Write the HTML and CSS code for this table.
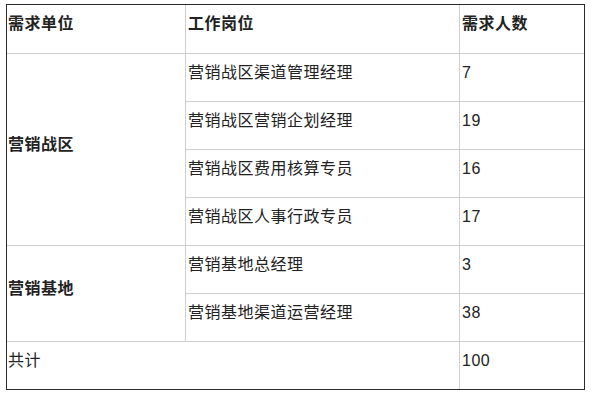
FILE: index.html
```html
<!DOCTYPE html>
<html lang="zh">
<head>
<meta charset="utf-8">
<link rel="stylesheet" href="styles.css">
</head>
<body>
<table class="grid">
  <tr class="head">
    <td class="c1">需求单位</td>
    <td class="c2">工作岗位</td>
    <td class="c3 last">需求人数</td>
  </tr>
  <tr>
    <td class="c1 unit" rowspan="4">营销战区</td>
    <td class="c2">营销战区渠道管理经理</td>
    <td class="c3 last">7</td>
  </tr>
  <tr>
    <td class="c2">营销战区营销企划经理</td>
    <td class="c3 last">19</td>
  </tr>
  <tr>
    <td class="c2">营销战区费用核算专员</td>
    <td class="c3 last">16</td>
  </tr>
  <tr>
    <td class="c2">营销战区人事行政专员</td>
    <td class="c3 last">17</td>
  </tr>
  <tr>
    <td class="c1 unit" rowspan="2">营销基地</td>
    <td class="c2">营销基地总经理</td>
    <td class="c3 last">3</td>
  </tr>
  <tr>
    <td class="c2">营销基地渠道运营经理</td>
    <td class="c3 last">38</td>
  </tr>
  <tr class="total">
    <td colspan="2">共计</td>
    <td class="c3 last">100</td>
  </tr>
</table>
</body>
</html>
```

FILE: styles.css
```css
html, body {
  margin: 0;
  background: #ffffff;
}
body {
  padding: 4px 0 0 6px;
  font-family: "Liberation Sans", "Noto Sans CJK SC", sans-serif;
  font-size: 16px;
  color: #222222;
}
.grid {
  border-collapse: separate;
  border-spacing: 0;
  border: 1px solid #2a2a2a;
  width: 578px;
  table-layout: fixed;
}
.grid td {
  border-right: 1px solid #cfcfcf;
  border-bottom: 1px solid #cfcfcf;
  padding: 7px 2px 16px 2px;
  line-height: 24px;
  vertical-align: middle;
  text-align: left;
  white-space: nowrap;
  letter-spacing: 0.5px;
}
.grid td.c1 { width: 175px; padding-left: 1px; }
.grid td.c2 { width: 269px; }
.grid td.c3 { width: 120px; }
.grid td.last { border-right: none; }
.grid tr.head td { font-weight: bold; padding-bottom: 17px; }
.grid td.unit { font-weight: bold; }
.grid tr.total td { border-bottom: none; }
.grid tr.total td:first-child { padding-left: 1px; }
```
